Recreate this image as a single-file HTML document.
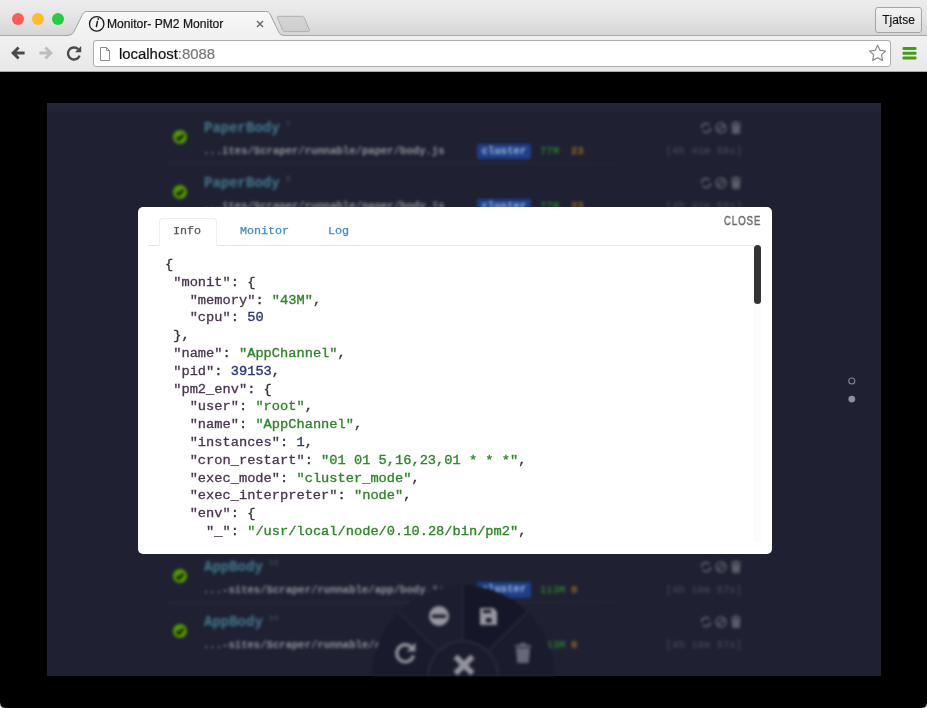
<!DOCTYPE html>
<html lang="en">
<head>
<meta charset="utf-8">
<title>Monitor- PM2 Monitor</title>
<style>
*{box-sizing:border-box;margin:0;padding:0}
html,body{width:927px;height:708px;overflow:hidden;background:#000}
body{position:relative;font-family:"Liberation Sans",sans-serif;}
.abs{position:absolute}
/* ---------- browser chrome ---------- */
#chrome{position:absolute;left:0;top:0;width:927px;height:72px;background:#ececec;overflow:hidden}
#tabstrip{position:absolute;left:0;top:0;width:927px;height:36px;background:linear-gradient(#ededed 0,#e6e6e6 40%,#d5d5d5 100%);}
#toolbar{position:absolute;left:0;top:36px;width:927px;height:36px;background:linear-gradient(#f1f1f1,#e8e8e8);border-bottom:1px solid #a9a9a9}
#tabsvg{position:absolute;left:0;top:0}
.light{position:absolute;top:13px;width:12px;height:12px;border-radius:50%}
#tabtitle{position:absolute;left:107px;top:17.4px;font-size:12.1px;line-height:14px;color:#111;-webkit-text-stroke:0.2px #111;white-space:nowrap}
#user{position:absolute;left:875px;top:6.5px;width:47px;height:26px;border:1px solid #a5a5a5;border-radius:3px;background:linear-gradient(#f3f3f3,#e2e2e2);font-size:12px;line-height:24px;text-align:center;color:#111;-webkit-text-stroke:0.15px #111}
#omni{position:absolute;left:93px;top:40px;width:798px;height:27px;background:#fff;border:1px solid #acacac;border-radius:3px;}
#url{position:absolute;left:119px;top:44.5px;font-size:14.9px;line-height:18px;color:#111;white-space:nowrap}
#url{-webkit-text-stroke:0.2px #111}
#url span{color:#777;-webkit-text-stroke:0.2px #777}
/* ---------- page ---------- */
#panel{position:absolute;left:46.5px;top:103px;width:834.5px;height:573px;background:linear-gradient(#232636 0,#222535 6px,#1f2133 10px,#1f2133 100%);filter:blur(0.6px)}
#blurwrap{position:absolute;left:0;top:0;width:927px;height:708px;filter:blur(1.45px)}
.row{position:absolute;left:0;width:927px;height:55px;font-family:"Liberation Mono",monospace;font-weight:bold;white-space:nowrap}
.row .chk{position:absolute;left:173px;top:29px;width:14px;height:14px;border-radius:50%;background:#559a00}
.row .chk svg{display:block}
.row .nm{position:absolute;left:204px;top:17px;font-size:14px;line-height:20px;color:#457a8e}
.row .nm sup{font-size:8px;color:#3c4a5c;margin-left:6px;vertical-align:6px;line-height:0}
.row .pth{position:absolute;left:203px;top:43px;font-size:10.6px;line-height:14px;color:#93949c}
.row .bdg{position:absolute;left:477px;top:42.5px;width:54px;height:15.5px;border-radius:2px;background:#1d3e88;color:#a9bbdc;font-size:10.6px;line-height:15px;text-align:center}
.row .mem{position:absolute;left:540px;top:43px;font-size:10.6px;line-height:14px;color:#2c742c}
.row .cpu{position:absolute;left:571px;top:43px;font-size:10.6px;line-height:14px;color:#9c6c1c}
.row .tm{position:absolute;right:185px;top:43px;font-size:10.6px;line-height:14px;color:#3d4150}
.row .sep{position:absolute;left:167px;top:62px;width:580px;height:1px;background:linear-gradient(90deg,#2f3144 0,#2f3144 50%,#1f2133 92%)}
.row .acts{position:absolute;left:698.5px;top:19px}
/* ---------- modal ---------- */
#modal{position:absolute;left:138px;top:207px;width:634px;height:347px;background:#fff;border-radius:5px;overflow:hidden}
#close{position:absolute;left:723.5px;top:214px;font-size:12px;line-height:14px;letter-spacing:1.2px;color:#6a6a6a;-webkit-text-stroke:0.45px #6a6a6a;transform:scaleX(0.8);transform-origin:0 50%;white-space:nowrap}
.tab{position:absolute;top:218px;height:27px;font-family:"Liberation Mono",monospace;font-size:11.7px;line-height:26px;color:#3f88c8;-webkit-text-stroke:0.25px #3f88c8;white-space:nowrap}
#tabline{position:absolute;left:148px;top:245px;width:606px;height:1px;background:#e4e4e4}
#t1{left:159px;width:58px;height:28px;border:1px solid #eeeeee;border-bottom-color:#fff;line-height:24px;text-indent:-2px;border-radius:4px 4px 0 0;color:#555;-webkit-text-stroke:0.25px #555;text-align:center;background:#fff}
#code{position:absolute;left:165px;top:256.3px;font-family:"Liberation Mono",monospace;font-size:13.7px;line-height:17.8px;color:#333;-webkit-text-stroke:0.3px #333;white-space:pre}
#code .s{color:#30852a;-webkit-text-stroke:0.35px #30852a}
#code .n{color:#2b3376;-webkit-text-stroke:0.35px #2b3376}
#code .k{color:#48344e;-webkit-text-stroke:0.3px #48344e}
#thumb{position:absolute;left:754px;top:245px;width:7px;height:59px;border-radius:4px;background:#333}
#track{position:absolute;left:753px;top:245px;width:8px;height:296px;background:#fbfbfb}
#code,#tabtitle,#url,#user,.tab,#close{will-change:transform}
</style>
</head>
<body>
<div id="panel"></div>
<div id="blurwrap">
  <div class="row" style="top:101px"><div class="chk"><svg width="14" height="14" viewBox="0 0 14 14"><path d="M3.6 7.2 L6 9.6 L10.4 4.8" fill="none" stroke="#1c2616" stroke-width="3"/></svg></div><div class="nm">PaperBody<sup>7</sup></div><div class="pth">...ites/Scraper/runnable/paper/body.js</div><div class="bdg">cluster</div><div class="mem">77M</div><div class="cpu">23</div><div class="tm">[4h 41m 58s]</div><svg class="acts" width="46" height="16" viewBox="0 0 46 16"><g fill="none" stroke="#5a5c68" stroke-width="1.8"><path d="M2.5 8 A4.5 4.5 0 0 1 10.5 5.2 M11.5 8 A4.5 4.5 0 0 1 3.5 10.8"/><circle cx="22" cy="8" r="4.8"/><path d="M18.8 11.2 L25.2 4.8"/></g><path d="M32.5 5 H41.5 L40.7 14 H33.3 Z M32 2.8 H42 V4.2 H32 Z M35 1.5 H39 V3 H35 Z" fill="#5a5c68"/></svg><div class="sep"></div></div>
  <div class="row" style="top:156px"><div class="chk"><svg width="14" height="14" viewBox="0 0 14 14"><path d="M3.6 7.2 L6 9.6 L10.4 4.8" fill="none" stroke="#1c2616" stroke-width="3"/></svg></div><div class="nm">PaperBody<sup>9</sup></div><div class="pth">...ites/Scraper/runnable/paper/body.js</div><div class="bdg">cluster</div><div class="mem">77M</div><div class="cpu">23</div><div class="tm">[4h 41m 58s]</div><svg class="acts" width="46" height="16" viewBox="0 0 46 16"><g fill="none" stroke="#5a5c68" stroke-width="1.8"><path d="M2.5 8 A4.5 4.5 0 0 1 10.5 5.2 M11.5 8 A4.5 4.5 0 0 1 3.5 10.8"/><circle cx="22" cy="8" r="4.8"/><path d="M18.8 11.2 L25.2 4.8"/></g><path d="M32.5 5 H41.5 L40.7 14 H33.3 Z M32 2.8 H42 V4.2 H32 Z M35 1.5 H39 V3 H35 Z" fill="#5a5c68"/></svg><div class="sep"></div></div>
  <div class="row" style="top:539.5px"><div class="chk"><svg width="14" height="14" viewBox="0 0 14 14"><path d="M3.6 7.2 L6 9.6 L10.4 4.8" fill="none" stroke="#1c2616" stroke-width="3"/></svg></div><div class="nm">AppBody<sup>13</sup></div><div class="pth">...-sites/Scraper/runnable/app/body.js</div><div class="bdg">cluster</div><div class="mem">113M</div><div class="cpu">0</div><div class="tm">[4h 10m 57s]</div><svg class="acts" width="46" height="16" viewBox="0 0 46 16"><g fill="none" stroke="#5a5c68" stroke-width="1.8"><path d="M2.5 8 A4.5 4.5 0 0 1 10.5 5.2 M11.5 8 A4.5 4.5 0 0 1 3.5 10.8"/><circle cx="22" cy="8" r="4.8"/><path d="M18.8 11.2 L25.2 4.8"/></g><path d="M32.5 5 H41.5 L40.7 14 H33.3 Z M32 2.8 H42 V4.2 H32 Z M35 1.5 H39 V3 H35 Z" fill="#5a5c68"/></svg><div class="sep"></div></div>
  <div class="row" style="top:594.5px"><div class="chk"><svg width="14" height="14" viewBox="0 0 14 14"><path d="M3.6 7.2 L6 9.6 L10.4 4.8" fill="none" stroke="#1c2616" stroke-width="3"/></svg></div><div class="nm">AppBody<sup>14</sup></div><div class="pth">...-sites/Scraper/runnable/app/body.js</div><div class="bdg">cluster</div><div class="mem">113M</div><div class="cpu">0</div><div class="tm">[4h 10m 57s]</div><svg class="acts" width="46" height="16" viewBox="0 0 46 16"><g fill="none" stroke="#5a5c68" stroke-width="1.8"><path d="M2.5 8 A4.5 4.5 0 0 1 10.5 5.2 M11.5 8 A4.5 4.5 0 0 1 3.5 10.8"/><circle cx="22" cy="8" r="4.8"/><path d="M18.8 11.2 L25.2 4.8"/></g><path d="M32.5 5 H41.5 L40.7 14 H33.3 Z M32 2.8 H42 V4.2 H32 Z M35 1.5 H39 V3 H35 Z" fill="#5a5c68"/></svg></div>
<svg class="abs" style="left:0;top:0" width="927" height="708" viewBox="0 0 927 708">
    <defs><clipPath id="pc"><rect x="47" y="103" width="834" height="573"/></clipPath></defs>
    <g clip-path="url(#pc)">
      <path d="M463 676 L372.0 676.0 A91 91 0 0 1 398.7 611.7 Z" fill="#191b2c"/>
      <path d="M463 676 L398.7 611.7 A91 91 0 0 1 463.0 585.0 Z" fill="#1c1e30"/>
      <path d="M463 676 L463.0 585.0 A91 91 0 0 1 527.3 611.7 Z" fill="#151728"/>
      <path d="M463 676 L527.3 611.7 A91 91 0 0 1 554.0 676.0 Z" fill="#1a1c2e"/>
      <path d="M438.3 651.3 L398.7 611.7 M463.0 641.0 L463.0 585.0 M487.7 651.3 L527.3 611.7" fill="none" stroke="#282b42" stroke-width="1.3"/>
      <circle cx="463" cy="676" r="35" fill="#1a1c2e" stroke="#2b2e46" stroke-width="1.5"/>
      <!-- refresh -->
      <path d="M411.5 647.5 A8.5 8.5 0 1 0 413.5 655.5" fill="none" stroke="#8f9099" stroke-width="3.4"/>
      <path d="M406.5 651.5 H415.5 V642.5 Z" fill="#8f9099"/>
      <!-- minus circle -->
      <circle cx="439" cy="616" r="10" fill="#95969e"/>
      <rect x="432" y="614.5" width="14" height="3.6" rx="1" fill="#1c1e30"/>
      <!-- save -->
      <path d="M480 608 H493.5 L497 611.5 V625 H480 Z" fill="#95969e"/>
      <rect x="483" y="610" width="8" height="3" fill="#151728"/>
      <rect x="486" y="618" width="5.5" height="4.5" fill="#151728"/>
      <!-- trash -->
      <path d="M516 648 H530 L528.8 663 H517.2 Z M515 645 H531 V647 H515 Z M520 643 H526 V645 H520 Z" fill="#666878"/>
      <!-- close X -->
      <path d="M455.5 656.5 L472.5 673.5 M472.5 656.5 L455.5 673.5" fill="none" stroke="#92939b" stroke-width="6"/>
    </g>
  </svg>
  
</div>
<svg class="abs" style="left:840px;top:370px" width="24" height="40" viewBox="0 0 24 40"><circle cx="11.8" cy="11" r="3" fill="none" stroke="#85868f" stroke-width="1.1"/><circle cx="11.8" cy="29.1" r="3.4" fill="#8e8f97"/></svg>
<div id="modal"></div>
<div id="track"></div>
<div id="thumb"></div>
<div id="tabline"></div>
<div class="tab" id="t1">Info</div>
<div class="tab" style="left:240px">Monitor</div>
<div class="tab" style="left:328px">Log</div>
<div id="close">CLOSE</div>
<pre id="code">{
 <span class="k">"monit"</span>: {
   <span class="k">"memory"</span>: <span class="s">"43M"</span>,
   <span class="k">"cpu"</span>: <span class="n">50</span>
 },
 <span class="k">"name"</span>: <span class="s">"AppChannel"</span>,
 <span class="k">"pid"</span>: <span class="n">39153</span>,
 <span class="k">"pm2_env"</span>: {
   <span class="k">"user"</span>: <span class="s">"root"</span>,
   <span class="k">"name"</span>: <span class="s">"AppChannel"</span>,
   <span class="k">"instances"</span>: <span class="n">1</span>,
   <span class="k">"cron_restart"</span>: <span class="s">"01 01 5,16,23,01 * * *"</span>,
   <span class="k">"exec_mode"</span>: <span class="s">"cluster_mode"</span>,
   <span class="k">"exec_interpreter"</span>: <span class="s">"node"</span>,
   <span class="k">"env"</span>: {
     <span class="k">"_"</span>: <span class="s">"/usr/local/node/0.10.28/bin/pm2"</span>,</pre>

<div class="abs" style="left:0;top:703px;width:5px;height:5px;background:radial-gradient(circle at 100% 0,#000 0,#000 4.2px,#d8d8d8 5.6px)"></div>
<div class="abs" style="left:922px;top:703px;width:5px;height:5px;background:radial-gradient(circle at 0 0,#000 0,#000 4.2px,#d8d8d8 5.6px)"></div>
<div id="chrome">
  <div id="tabstrip"></div>
  <div id="toolbar"></div>
  <div id="omni"></div>
  <svg id="tabsvg" width="927" height="72" viewBox="0 0 927 72">
    <defs>
      <linearGradient id="gtab" x1="0" y1="0" x2="0" y2="1"><stop offset="0" stop-color="#f8f8f8"/><stop offset="1" stop-color="#f0f0f0"/></linearGradient>
      <linearGradient id="gnew" x1="0" y1="0" x2="0" y2="1"><stop offset="0" stop-color="#d6d6d6"/><stop offset="1" stop-color="#cdcdcd"/></linearGradient>
    </defs>
    <!-- strip bottom line -->
    <path d="M0 35.5 H927" fill="none" stroke="#a8a8a8" stroke-width="1"/>
    <!-- new tab button -->
    <path d="M277.6 18 C277 16.8 277.6 16.3 278.8 16.3 H301.5 C303 16.3 303.8 16.8 304.4 18 L309.3 29.8 C309.8 31 309.3 31.6 308 31.6 H285.5 C284 31.6 283.2 31.1 282.6 29.9 Z" fill="url(#gnew)" stroke="#b0b0b0" stroke-width="1"/>
    <!-- active tab -->
    <path d="M65 35.5 C70.5 35.5 72.5 34.5 74 31.5 L82.5 14.5 C83.8 12.2 85 11.5 87.5 11.5 H265.5 C268 11.5 269.2 12.2 270.3 14.5 L278.6 31.8 C279.8 34.5 281.5 35.5 286 35.5 V37 H65 Z" fill="url(#gtab)"/>
    <path d="M65 35.5 C70.5 35.5 72.5 34.5 74 31.5 L82.5 14.5 C83.8 12.2 85 11.5 87.5 11.5 H265.5 C268 11.5 269.2 12.2 270.3 14.5 L278.6 31.8 C279.8 34.5 281.5 35.5 286 35.5" fill="none" stroke="#a0a0a0" stroke-width="1"/>
    <!-- favicon: gauge -->
    <g fill="none" stroke="#1a1a1a" stroke-linecap="round">
      <circle cx="96.7" cy="23.9" r="7.2" stroke-width="1.3"/>
      <path d="M96.4 26.6 L97.4 21.6" stroke-width="1.5"/>
    </g>
    <circle cx="98.3" cy="19" r="0.9" fill="#1a1a1a"/>
    <!-- tab close -->
    <path d="M257 21 L263 27 M263 21 L257 27" stroke="#6a6a6a" stroke-width="1.5" fill="none"/>
    <!-- back -->
    <path d="M11 53 L17.6 46.6 L19.6 48.6 L16.6 51.4 H24.6 V54.6 H16.6 L19.6 57.4 L17.6 59.4 Z" fill="#4a4a4a"/>
    <!-- forward -->
    <path d="M53 53 L46.4 46.6 L44.4 48.6 L47.4 51.4 H39.4 V54.6 H47.4 L44.4 57.4 L46.4 59.4 Z" fill="#bdbdbd"/>
    <!-- reload -->
    <path d="M78.2 49.2 A6 6 0 1 0 79.6 55.6" fill="none" stroke="#4a4a4a" stroke-width="2.4"/>
    <path d="M75 52.2 H81.2 V46 Z" fill="#4a4a4a"/>
    <!-- page icon -->
    <path d="M100.5 47.5 H106.5 L109.5 50.5 V60.5 H100.5 Z" fill="#fff" stroke="#8c8c8c" stroke-width="1"/>
    <path d="M106.5 47.5 V50.5 H109.5" fill="none" stroke="#8c8c8c" stroke-width="1"/>
    <!-- star -->
    <path d="M877.6 45.2 L880.0 50.3 L885.6 51.0 L881.5 54.9 L882.5 60.4 L877.6 57.7 L872.7 60.4 L873.7 54.9 L869.6 51.0 L875.2 50.3 Z" fill="#fff" stroke="#8a8a8a" stroke-width="1.2" stroke-linejoin="round"/>
    <!-- menu -->
    <g fill="#459a17"><rect x="902.5" y="47" width="14" height="3" rx="1"/><rect x="902.5" y="51.8" width="14" height="3" rx="1"/><rect x="902.5" y="56.6" width="14" height="3" rx="1"/></g>
  </svg>
  <div class="light" style="left:12px;background:#fc5b57"></div>
  <div class="light" style="left:32px;background:#fdbc2e"></div>
  <div class="light" style="left:52px;background:#2aca41"></div>
  <div id="tabtitle">Monitor- PM2 Monitor</div>
  <div id="user">Tjatse</div>
  <div id="url">localhost<span>:8088</span></div>
</div>
</body>
</html>
